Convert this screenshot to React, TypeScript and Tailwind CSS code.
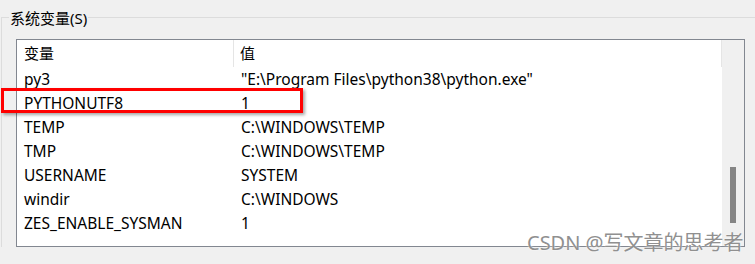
import React from "react";

type Row = { name: string; value: string };

const rows: Row[] = [
  { name: "py3", value: '"E:\\Program Files\\python38\\python.exe"' },
  { name: "PYTHONUTF8", value: "1" },
  { name: "TEMP", value: "C:\\WINDOWS\\TEMP" },
  { name: "TMP", value: "C:\\WINDOWS\\TEMP" },
  { name: "USERNAME", value: "SYSTEM" },
  { name: "windir", value: "C:\\WINDOWS" },
  { name: "ZES_ENABLE_SYSMAN", value: "1" },
];

const App: React.FC = () => {
  return (
    <div className="relative h-[264px] w-[755px] overflow-hidden bg-[#f0f0f0] font-['Noto_Sans','Noto_Sans_CJK_SC',sans-serif] text-[15px] text-black">
      <div className="pl-[1px] pt-[17px]">
        <div className="relative border-l border-t border-[#dcdcdc] pl-[14px] pt-[21px]">
          {/* group label */}
          <span className="absolute left-[7px] top-[-10px] bg-[#f0f0f0] px-[1px] leading-[20px]">
            系统变量(S)
          </span>

          <div className="flex h-[208px] w-[729px] border border-[#828790] bg-white">
            <div className="flex-1">
              <div className="flex h-[27px] items-center">
                <div className="flex h-full w-[217px] items-center border-r border-[#e5e5e5] pl-[7px]">
                  变量
                </div>
                <div className="flex h-full flex-1 items-center border-r border-[#e5e5e5] pl-[6px]">
                  值
                </div>
              </div>
              {rows.map((r) => (
                <div key={r.name} className="flex h-[24px] items-center text-[15.5px] leading-[24px]">
                  <div className="w-[218px] pl-[7px]">{r.name}</div>
                  <div className="flex-1 pl-[6px]">{r.value}</div>
                </div>
              ))}
            </div>
            <div className="w-[22px] bg-[#f0f0f0] pl-[8px] pt-[127px]">
              <div className="h-[56px] w-[6px] bg-[#858585]" />
            </div>
          </div>
        </div>
      </div>

      {/* highlight box */}
      <div className="absolute left-[1px] top-[88px] h-[25px] w-[302px] border-[3px] border-[#ff0000] shadow-[2px_2px_3px_rgba(0,0,0,0.35)]" />

      {/* watermark */}
      <div className="absolute left-[527px] top-[231px] text-[20px] leading-[24px] text-[#909090] [text-shadow:0_0_2px_#fff]">
        CSDN @写文章的思考者
      </div>
    </div>
  );
};

export default App;
